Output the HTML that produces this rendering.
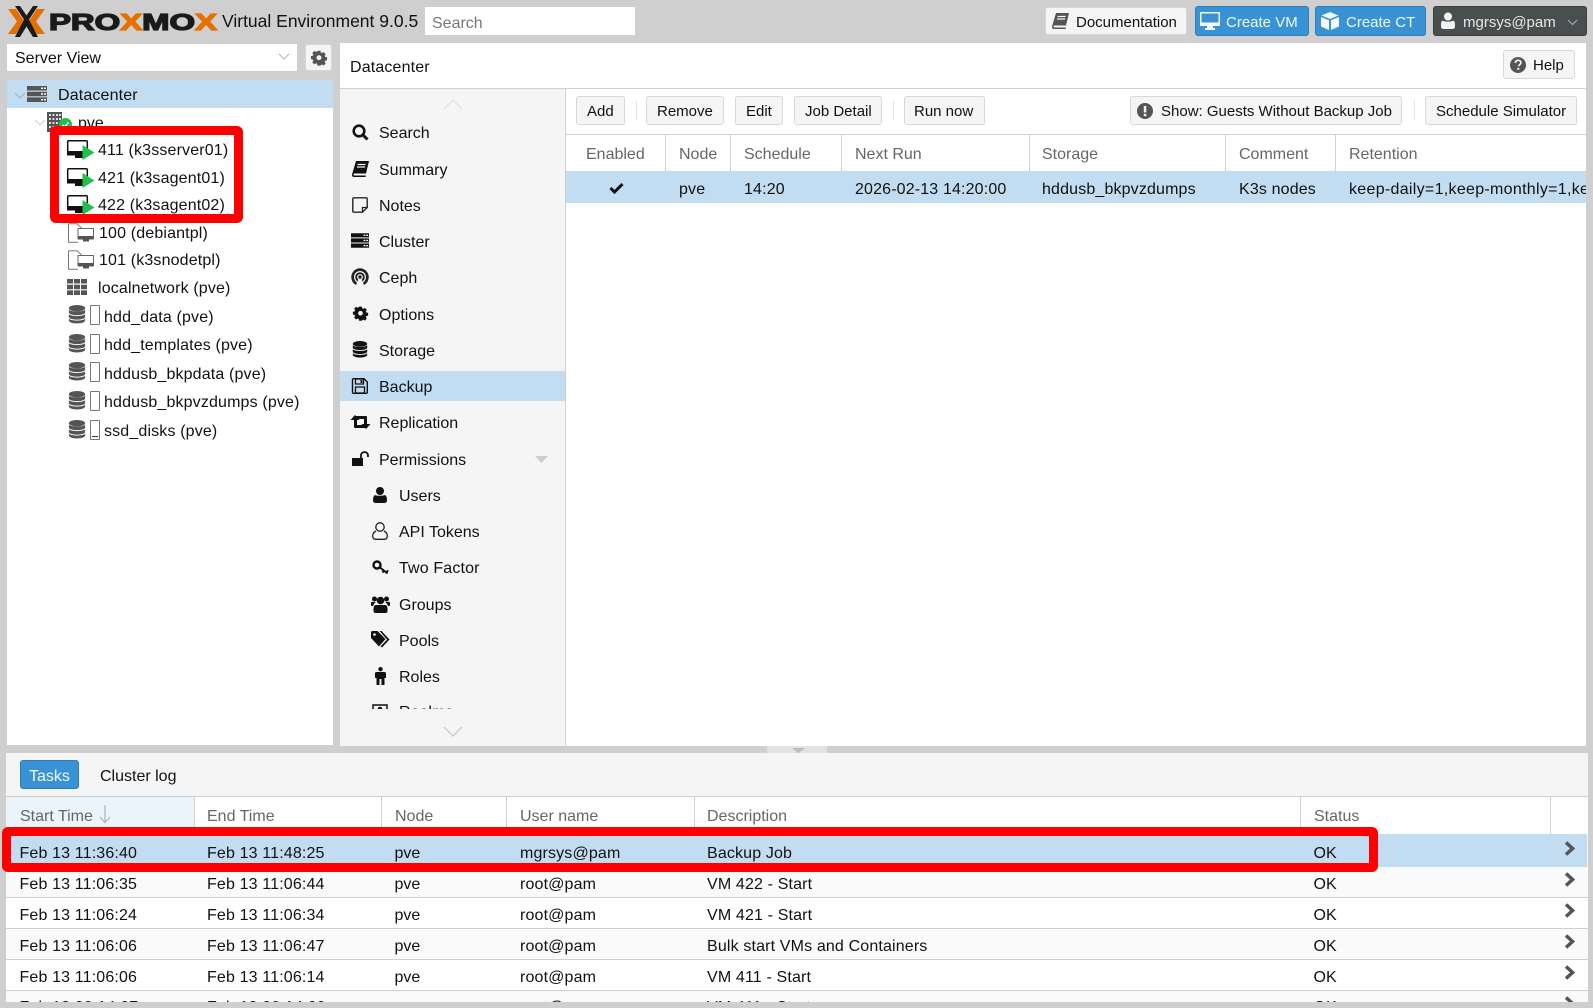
<!DOCTYPE html>
<html>
<head>
<meta charset="utf-8">
<title>Proxmox Virtual Environment</title>
<style>
html,body{margin:0;padding:0;width:1593px;height:1008px;overflow:hidden;background:#cfcfcf;}
body{position:relative;font-family:"Liberation Sans",sans-serif;font-size:16px;color:#111;}
div,span,svg{position:absolute;}
.t{white-space:nowrap;height:20px;line-height:20px;margin-top:2px;}
.d{letter-spacing:.15px;}
.s{font-size:15px;}
.h{color:#666;}
.b{box-sizing:border-box;background:#f5f5f5;border:1px solid #d8d8d8;border-radius:3px;}
.p{box-sizing:border-box;background:#3892d4;border:1px solid #2b7fbd;border-radius:3px;}
.w{color:#f4f9fd;}
.l{background:#d0d0d0;}
.i{overflow:visible;}
</style>
</head>
<body>
<svg width="0" height="0" style="left:0;top:0">
<defs>
<symbol id="vm" viewBox="0 0 28 21" overflow="visible">
<path d="M1.500.8h18a.8.8 0 0 1 .8.8V12H.7V1.600a.8.8 0 0 1 .8-.8z" fill="#fff" stroke="#111" stroke-width="1.500"/>
<path d="M0 11h21v4.500H0zM8 15h8v3H8z" fill="#111"/>
<path d="M15.500 5l12 7.500-12 7.500z" fill="#21bf4b"/>
</symbol>
<symbol id="tpl" viewBox="0 0 28 20">
<path d="M1.500.7H10L16 6.500M1.500.7V19.300H11" fill="none" stroke="#777" stroke-width="1"/>
<path d="M11 5.500h15.500v10H11z" fill="#fff" stroke="#666" stroke-width="1"/>
<path d="M11 13h15.500v3.500H11zM16 16.500h6v2h-6z" fill="#555"/>
</symbol>
<symbol id="db" viewBox="0 0 20 22">
<ellipse cx="10" cy="4" rx="9" ry="3.600" fill="currentColor"/>
<path d="M1 5.500c1 3 17 3 18 0v3.500c-1 3.500-17 3.500-18 0z" fill="currentColor"/>
<path d="M1 10.500c1 3 17 3 18 0v3.500c-1 3.500-17 3.500-18 0z" fill="currentColor"/>
<path d="M1 15.500c1 3 17 3 18 0v2.500c-1 4-17 4-18 0z" fill="currentColor"/>
</symbol>
<symbol id="srv" viewBox="0 0 20 16">
<path d="M0 0h20v4.500H0zM0 5.700h20v4.500H0zM0 11.400h20v4.600H0z" fill="#555"/>
<path d="M14 1.500h2v1.500h-2zM17 1.500h2v1.500h-2zM14 7.200h2v1.500h-2zM17 7.200h2v1.500h-2zM14 13h2v1.500h-2zM17 13h2v1.500h-2z" fill="#fff"/>
</symbol>
<symbol id="gear" viewBox="0 0 20 20">
<path fill-rule="evenodd" d="M8 1h4l.5 2.500 1.500.7 2.200-1.400 2.800 2.800-1.400 2.200.7 1.500 2.500.5v4l-2.500.5-.7 1.500 1.400 2.200-2.800 2.800-2.200-1.400-1.500.7L12 21H8l-.5-2.500-1.500-.7-2.200 1.400L1 16.400l1.400-2.200-.7-1.500L-.8 12.200v-4l2.500-.5.700-1.500L1 4 3.800 1.200 6 2.600l1.500-.7zM10 7a3.300 3.300 0 1 0 0 6.600A3.300 3.300 0 0 0 10 7z" transform="translate(1.700 1.100) scale(.83)"/>
</symbol>
<symbol id="chev" viewBox="0 0 11 15"><path d="M2 1.500L8.500 7.500 2 13.500" fill="none" stroke="#555" stroke-width="3.500"/></symbol>
</defs>
</svg>

<!-- logo -->
<svg class="i" style="left:0;top:0" width="225" height="42" viewBox="0 0 225 42">
<path d="M8 9h8l8.500 12.500L16 34H8l9-12.500z M45 9h-8l-8.500 12.500L37 34h8l-9-12.500z" fill="#e57000"/>
<path d="M15 6h5l6.500 9.500L33 6h5L29 19.500 38 37h-5l-6.500-10.500L20 37h-5L24 19.500z" fill="#1a1a1a"/>
<text x="49" y="29.800" font-family="Liberation Sans" font-weight="700" font-size="23" stroke-width="1.300" stroke="#1a1a1a" fill="#1a1a1a" textLength="168" lengthAdjust="spacingAndGlyphs">PRO<tspan fill="#e57000" stroke="#e57000">X</tspan>MO<tspan fill="#e57000" stroke="#e57000">X</tspan></text>
</svg>
<span class="t" style="left:222px;top:9px;font-size:17.500px;">Virtual Environment 9.0.5</span>
<div style="left:425px;top:7px;width:210px;height:28px;background:#fff;"></div>
<span class="t" style="left:432px;top:12px;color:#777;">Search</span>

<!-- top right -->
<div class="b" style="left:1045px;top:7px;width:142px;height:28px;"></div>
<svg class="i" style="left:1052px;top:13px" width="17" height="16" viewBox="0 0 17 16"><path d="M4 0h13l-3 12.500H2.500a1 1 0 0 0 0 2H14l-.5 1.500H2a2 2 0 0 1-2-2.500z" fill="#555"/><path d="M5.500 3.500h8M5 6h8" stroke="#f5f5f5" stroke-width="1.200"/></svg>
<span class="t s" style="left:1076px;top:11px;">Documentation</span>
<div class="p" style="left:1195px;top:6px;width:114px;height:30px;"></div>
<svg class="i" style="left:1200px;top:12px" width="20" height="18" viewBox="0 0 20 18"><path d="M1 0h18a1 1 0 0 1 1 1v12a1 1 0 0 1-1 1H1a1 1 0 0 1-1-1V1a1 1 0 0 1 1-1z" fill="#f4f9fd"/><path d="M1.500 1.500h17v9h-17z" fill="#3892d4"/><path d="M7 14h6v2h2v2H5v-2h2z" fill="#f4f9fd"/></svg>
<span class="t w s" style="left:1226px;top:11px;">Create VM</span>
<div class="p" style="left:1315px;top:6px;width:111px;height:30px;"></div>
<svg class="i" style="left:1321px;top:12px" width="18" height="18" viewBox="0 0 18 18"><path d="M9 0l8.500 3.500L9 7 .5 3.500z" fill="#f4f9fd"/><path d="M0 5l8 3.300V18l-8-3.500zM18 5l-8 3.300V18l8-3.500z" fill="#f4f9fd"/></svg>
<span class="t w s" style="left:1346px;top:11px;">Create CT</span>
<div style="box-sizing:border-box;left:1433px;top:6px;width:154px;height:30px;background:#494e4e;border:1px solid #3b3f3f;border-radius:3px;"></div>
<svg class="i" style="left:1441px;top:12px" width="14" height="17" viewBox="0 0 14 17"><circle cx="7" cy="4.500" r="4" fill="#f4f4f4"/><path d="M1.500 8.500C3 10 11 10 12.500 8.500 14 9.500 14 12 14 14c0 2-1 3-3 3H3c-2 0-3-1-3-3 0-2 0-4.500 1.500-5.500z" fill="#f4f4f4"/></svg>
<span class="t s" style="left:1463px;top:11px;color:#e8e8e8;">mgrsys@pam</span>
<svg class="i" style="left:1567px;top:19px" width="11" height="7" viewBox="0 0 11 7"><path d="M1 1l4.500 4.500L10 1" fill="none" stroke="#aaa" stroke-width="1.200"/></svg>

<!-- left selector -->
<div style="left:7px;top:44px;width:290px;height:27px;background:#fff;"></div>
<span class="t" style="left:15px;top:47px;">Server View</span>
<svg class="i" style="left:278px;top:53px" width="12" height="8" viewBox="0 0 12 8"><path d="M1 1l5 5 5-5" fill="none" stroke="#bbb" stroke-width="1.200"/></svg>
<div class="b" style="left:305px;top:44px;width:27px;height:27px;"></div>
<svg class="i" style="left:310px;top:49px;fill:#555" width="18" height="18"><use href="#gear"/></svg>

<!-- tree -->
<div style="left:7px;top:80px;width:326px;height:665px;background:#fff;overflow:hidden;"></div>
<div style="left:7px;top:80px;width:326px;height:28px;background:#c2ddf2;"></div>
<svg class="i" style="left:14px;top:92px" width="12" height="8" viewBox="0 0 12 8"><path d="M1 1l5 5 5-5" fill="none" stroke="#aab" stroke-width="1"/></svg>
<svg class="i" style="left:27px;top:86px" width="20" height="16"><use href="#srv"/></svg>
<span class="t d" style="left:58px;top:84px;">Datacenter</span>
<svg class="i" style="left:34px;top:119px" width="12" height="8" viewBox="0 0 12 8"><path d="M1 1l5 5 5-5" fill="none" stroke="#ccc" stroke-width="1"/></svg>
<svg class="i" style="left:47px;top:112px" width="26" height="22" viewBox="0 0 26 22"><path d="M0 0h15v20H0z" fill="#555"/><path d="M2 2h2v2H2zM5.500 2h2v2h-2zM9 2h2v2H9zM12 2h2v2h-2zM2 6h2v2H2zM5.500 6h2v2h-2zM9 6h2v2H9zM12 6h2v2h-2zM2 10h2v2H2zM5.500 10h2v2h-2zM9 10h2v2H9zM2 14h2v2H2zM5.500 14h2v2h-2z" fill="#ddd"/><circle cx="18.500" cy="12.500" r="6.500" fill="#21bf4b"/><path d="M15.500 13l2 2 4-4.500" fill="none" stroke="#fff" stroke-width="1.600"/></svg>
<span class="t" style="left:78px;top:112px;">pve</span>

<svg class="i" style="left:67px;top:140px" width="28" height="21"><use href="#vm"/></svg>
<span class="t d" style="left:98px;top:139px;">411 (k3sserver01)</span>
<svg class="i" style="left:67px;top:168px" width="28" height="21"><use href="#vm"/></svg>
<span class="t d" style="left:98px;top:167px;">421 (k3sagent01)</span>
<svg class="i" style="left:67px;top:195px" width="28" height="21"><use href="#vm"/></svg>
<span class="t d" style="left:98px;top:194px;">422 (k3sagent02)</span>
<svg class="i" style="left:67px;top:223px" width="28" height="20"><use href="#tpl"/></svg>
<span class="t d" style="left:99px;top:222px;">100 (debiantpl)</span>
<svg class="i" style="left:67px;top:250px" width="28" height="20"><use href="#tpl"/></svg>
<span class="t d" style="left:99px;top:249px;">101 (k3snodetpl)</span>
<svg class="i" style="left:67px;top:279px" width="20" height="16" viewBox="0 0 20 16"><path d="M0 0h6v4.500H0zM7 0h6v4.500H7zM14 0h6v4.500h-6zM0 5.700h6v4.500H0zM7 5.700h6v4.500H7zM14 5.700h6v4.500h-6zM0 11.400h6V16H0zM7 11.400h6V16H7zM14 11.400h6V16h-6z" fill="#555"/></svg>
<span class="t d" style="left:98px;top:277px;">localnetwork (pve)</span>

<svg class="i" style="left:68px;top:304px;color:#555" width="18" height="21"><use href="#db"/></svg>
<div style="box-sizing:border-box;left:90px;top:305px;width:10px;height:20px;border:1px solid #777;border-radius:1px;"></div>
<span class="t d" style="left:104px;top:306px;">hdd_data (pve)</span>
<svg class="i" style="left:68px;top:333px;color:#555" width="18" height="21"><use href="#db"/></svg>
<div style="box-sizing:border-box;left:90px;top:334px;width:10px;height:20px;border:1px solid #777;border-radius:1px;"></div>
<span class="t d" style="left:104px;top:334px;">hdd_templates (pve)</span>
<svg class="i" style="left:68px;top:361px;color:#555" width="18" height="21"><use href="#db"/></svg>
<div style="box-sizing:border-box;left:90px;top:362px;width:10px;height:20px;border:1px solid #777;border-radius:1px;"></div>
<span class="t d" style="left:104px;top:363px;">hddusb_bkpdata (pve)</span>
<svg class="i" style="left:68px;top:390px;color:#555" width="18" height="21"><use href="#db"/></svg>
<div style="box-sizing:border-box;left:90px;top:391px;width:10px;height:20px;border:1px solid #777;border-radius:1px;"></div>
<span class="t d" style="left:104px;top:391px;">hddusb_bkpvzdumps (pve)</span>
<svg class="i" style="left:68px;top:419px;color:#555" width="18" height="21"><use href="#db"/></svg>
<div style="box-sizing:border-box;left:90px;top:420px;width:10px;height:20px;border:1px solid #777;border-radius:1px;"></div>
<div style="left:92px;top:436px;width:6px;height:1px;background:#333;"></div>
<span class="t d" style="left:104px;top:420px;">ssd_disks (pve)</span>

<!-- content header -->
<div style="left:340px;top:43px;width:1246px;height:45px;background:#fff;"></div>
<span class="t d" style="left:350px;top:56px;">Datacenter</span>
<div class="b" style="left:1503px;top:50px;width:72px;height:29px;"></div>
<svg class="i" style="left:1510px;top:57px" width="16" height="16" viewBox="0 0 16 16"><circle cx="8" cy="8" r="8" fill="#555"/><path d="M5.300 6c.2-1.800 1.300-2.700 2.800-2.700S10.900 4.200 10.900 5.700c0 1.800-2.200 2-2.200 3.600" fill="none" stroke="#f5f5f5" stroke-width="1.700"/><rect x="7.300" y="10.800" width="2" height="2" fill="#f5f5f5"/></svg>
<span class="t s" style="left:1533px;top:54px;">Help</span>
<div class="l" style="left:340px;top:88px;width:1246px;height:1px;"></div>

<!-- nav -->
<div style="left:340px;top:89px;width:225px;height:657px;background:#f5f5f5;"></div>
<div class="l" style="left:565px;top:89px;width:1px;height:657px;"></div>
<svg class="i" style="left:443px;top:99px" width="20" height="11" viewBox="0 0 20 11"><path d="M1 10l9-9 9 9" fill="none" stroke="#e4e4e4" stroke-width="1.500"/></svg>
<svg class="i" style="left:352px;top:124px" width="17" height="17" viewBox="0 0 17 17"><circle cx="7" cy="7" r="5.300" fill="none" stroke="#111" stroke-width="2.600"/><path d="M10.500 10.500L15.500 15.500" stroke="#111" stroke-width="3"/></svg>
<span class="t" style="left:379px;top:122px;">Search</span>
<svg class="i" style="left:352px;top:161px" width="17" height="16" viewBox="0 0 17 16"><path d="M4 0h13l-3 12.500H2.500a1 1 0 0 0 0 2H14l-.5 1.500H2a2 2 0 0 1-2-2.500z" fill="#111"/><path d="M5.500 3.500h8M5 6h8" stroke="#f5f5f5" stroke-width="1.200"/></svg>
<span class="t" style="left:379px;top:159px;">Summary</span>
<svg class="i" style="left:352px;top:197px" width="16" height="16" viewBox="0 0 16 16"><path d="M2 .8h12a1.200 1.200 0 0 1 1.200 1.200v8.500L10.500 15.200H2A1.200 1.200 0 0 1 .8 14V2A1.200 1.200 0 0 1 2 .8z" fill="none" stroke="#222" stroke-width="1.400"/><path d="M15 10.500h-4.500v4.500" fill="none" stroke="#222" stroke-width="1.300"/></svg>
<span class="t" style="left:379px;top:195px;">Notes</span>
<svg class="i" style="left:351px;top:233px" width="18" height="15" viewBox="0 0 20 16"><path d="M0 0h20v4.500H0zM0 5.700h20v4.500H0zM0 11.400h20v4.600H0z" fill="#111"/><path d="M14 1.500h2v1.500h-2zM17 1.500h2v1.500h-2zM14 7.200h2v1.500h-2zM17 7.200h2v1.500h-2zM14 13h2v1.500h-2zM17 13h2v1.500h-2z" fill="#fff"/></svg>
<span class="t" style="left:379px;top:231px;">Cluster</span>
<svg class="i" style="left:351px;top:267px" width="18" height="19" viewBox="0 0 18 18"><path d="M5 17.500C2 16 .3 13 .3 9.500a8.700 8.700 0 0 1 17.400 0c0 3.500-1.700 6.500-4.700 8l-1-2.500c2-1.100 3-3.300 3-5.500a6 6 0 0 0-12 0c0 2.200 1 4.400 3 5.500z" fill="#222"/><path d="M6.500 14C5 13 4.200 11.300 4.200 9.500a4.800 4.800 0 0 1 9.600 0c0 1.800-.8 3.500-2.300 4.500l-.8-2c.8-.6 1.200-1.500 1.200-2.500a2.900 2.900 0 0 0-5.800 0c0 1 .4 1.900 1.200 2.500z" fill="#222"/><circle cx="9" cy="9.500" r="1.700" fill="#222"/></svg>
<span class="t" style="left:379px;top:267px;">Ceph</span>
<svg class="i" style="left:352px;top:305px;fill:#111" width="17" height="17"><use href="#gear"/></svg>
<span class="t" style="left:379px;top:304px;">Options</span>
<svg class="i" style="left:352px;top:340px;color:#111" width="16" height="19"><use href="#db"/></svg>
<span class="t" style="left:379px;top:340px;">Storage</span>
<div style="left:340px;top:371px;width:225px;height:30px;background:#c2ddf2;"></div>
<svg class="i" style="left:352px;top:378px" width="16" height="16" viewBox="0 0 16 16"><path d="M1.500.7h10.500l3.300 3.300V14.300a1 1 0 0 1-1 1H1.500a1 1 0 0 1-1-1V1.700a1 1 0 0 1 1-1z" fill="none" stroke="#111" stroke-width="1.400"/><path d="M3.500 1h8v5h-8zM3.500 9h9v6h-9z" fill="none" stroke="#111" stroke-width="1.300"/><path d="M8.500 2h1.800v3H8.500z" fill="#111"/></svg>
<span class="t" style="left:379px;top:376px;">Backup</span>
<svg class="i" style="left:351px;top:415px" width="19" height="14" viewBox="0 0 19 14"><path d="M4 0L8.500 5H6V10H12.500L15 13H4a1 1 0 0 1-1-1V5H-.5z" fill="#111"/><path d="M15 14L10.500 9H13V4H6.500L4 1H15a1 1 0 0 1 1 1V9H19.500z" fill="#111"/></svg>
<span class="t" style="left:379px;top:412px;">Replication</span>
<svg class="i" style="left:352px;top:451px" width="17" height="15" viewBox="0 0 17 15"><path d="M0 7h11v8H0z" fill="#111"/><path d="M9 7V4.500a3.500 3.500 0 0 1 7 0V6" fill="none" stroke="#111" stroke-width="1.800"/></svg>
<span class="t" style="left:379px;top:449px;">Permissions</span>
<svg class="i" style="left:535px;top:456px" width="13" height="7" viewBox="0 0 13 7"><path d="M0 0h13L6.500 7z" fill="#ccc"/></svg>
<svg class="i" style="left:373px;top:487px" width="14" height="16" viewBox="0 0 14 16"><circle cx="7" cy="4" r="4" fill="#111"/><path d="M2 8c1.500 1 8.500 1 10 0 1.500 1 2 3 2 5 0 2-1 3-3 3H3c-2 0-3-1-3-3 0-2 .5-4 2-5z" fill="#111"/></svg>
<span class="t" style="left:399px;top:485px;">Users</span>
<svg class="i" style="left:372px;top:522px" width="16" height="18" viewBox="0 0 16 18"><circle cx="8" cy="5" r="4.200" fill="none" stroke="#222" stroke-width="1.300"/><path d="M4 9c-2 1-3.300 3-3.300 5 0 2 1 3.300 3 3.300h8.600c2 0 3-1.300 3-3.300 0-2-1.300-4-3.300-5" fill="none" stroke="#222" stroke-width="1.300"/></svg>
<span class="t" style="left:399px;top:521px;">API Tokens</span>
<svg class="i" style="left:372px;top:560px" width="17" height="15" viewBox="0 0 17 15"><circle cx="5" cy="5" r="3.500" fill="none" stroke="#111" stroke-width="2.400"/><path d="M8 7.500l7.500 6M12 10.500l-1.500 2M14.500 12.300l1.500-2" stroke="#111" stroke-width="2"/></svg>
<span class="t d" style="left:399px;top:557px;">Two Factor</span>
<svg class="i" style="left:371px;top:595px" width="19" height="18" viewBox="0 0 19 18"><circle cx="9.500" cy="5.500" r="3.800" fill="#111"/><circle cx="3.500" cy="4" r="2.500" fill="#111"/><circle cx="15.500" cy="4" r="2.500" fill="#111"/><path d="M5 10h9c1.500 0 2.500 1.500 2.500 4v2c0 1-.5 2-2 2h-10c-1.500 0-2-1-2-2v-2c0-2.500 1-4 2.500-4z" fill="#111"/><path d="M0 8c0-1 1-1.500 2-1h3c-1.500 1-2.500 2-2.800 4H1c-1 0-1-1-1-3zM19 8c0-1-1-1.500-2-1h-3c1.500 1 2.500 2 2.800 4H18c1 0 1-1 1-3z" fill="#111"/></svg>
<span class="t" style="left:399px;top:594px;">Groups</span>
<svg class="i" style="left:371px;top:631px" width="19" height="17" viewBox="0 0 19 17"><path d="M0 1.500A1.500 1.500 0 0 1 1.500 0h5l8 8L8 15.500 0 7z" fill="#111"/><path d="M8.500 0h2l8 8.500L11 16.500l-1.500-1L16 8.500z" fill="#111"/><circle cx="3.500" cy="3.500" r="1.300" fill="#f5f5f5"/></svg>
<span class="t" style="left:399px;top:630px;">Pools</span>
<svg class="i" style="left:375px;top:667px" width="11" height="18" viewBox="0 0 11 18"><circle cx="5.500" cy="2.200" r="2.200" fill="#111"/><path d="M1.500 5h8A1.500 1.500 0 0 1 11 6.500V11H9.500v7h-3v-6h-2v6h-3v-7H0V6.500A1.500 1.500 0 0 1 1.500 5z" fill="#111"/></svg>
<span class="t" style="left:399px;top:666px;">Roles</span>
<div style="left:340px;top:695px;width:225px;height:14px;overflow:hidden;">
<svg class="i" style="left:32px;top:9px" width="16" height="14" viewBox="0 0 16 14"><path d="M1 1h14v12H1z" fill="none" stroke="#111" stroke-width="1.500"/><circle cx="8" cy="5" r="2.300" fill="#111"/></svg>
<span class="t" style="left:59px;top:6px;">Realms</span>
</div>
<svg class="i" style="left:443px;top:726px" width="20" height="11" viewBox="0 0 20 11"><path d="M1 1l9 9 9-9" fill="none" stroke="#ccc" stroke-width="1.500"/></svg>

<!-- content area -->
<div style="left:566px;top:89px;width:1020px;height:657px;background:#fff;"></div>
<div class="b" style="left:576px;top:96px;width:49px;height:29px;"></div><span class="t s" style="left:587px;top:100px;">Add</span>
<div style="left:636px;top:100px;width:1px;height:20px;background:#e4e4e4;"></div>
<div class="b" style="left:646px;top:96px;width:78px;height:29px;"></div><span class="t s" style="left:657px;top:100px;">Remove</span>
<div class="b" style="left:735px;top:96px;width:48px;height:29px;"></div><span class="t s" style="left:746px;top:100px;">Edit</span>
<div class="b" style="left:794px;top:96px;width:88px;height:29px;"></div><span class="t s" style="left:805px;top:100px;">Job Detail</span>
<div style="left:893px;top:100px;width:1px;height:20px;background:#e4e4e4;"></div>
<div class="b" style="left:904px;top:96px;width:81px;height:29px;"></div><span class="t s" style="left:914px;top:100px;">Run now</span>
<div class="b" style="left:1130px;top:96px;width:272px;height:29px;"></div>
<svg class="i" style="left:1137px;top:103px" width="16" height="16" viewBox="0 0 16 16"><circle cx="8" cy="8" r="8" fill="#555"/><rect x="6.800" y="3" width="2.500" height="6.500" fill="#f5f5f5"/><rect x="6.800" y="10.800" width="2.500" height="2.400" fill="#f5f5f5"/></svg>
<span class="t s" style="left:1161px;top:100px;">Show: Guests Without Backup Job</span>
<div style="left:1414px;top:100px;width:1px;height:20px;background:#e4e4e4;"></div>
<div class="b" style="left:1425px;top:96px;width:152px;height:29px;"></div><span class="t s" style="left:1436px;top:100px;">Schedule Simulator</span>
<div class="l" style="left:566px;top:134px;width:1020px;height:1px;"></div>

<div class="l" style="left:665px;top:135px;width:1px;height:36px;"></div>
<div class="l" style="left:730px;top:135px;width:1px;height:36px;"></div>
<div class="l" style="left:841px;top:135px;width:1px;height:36px;"></div>
<div class="l" style="left:1029px;top:135px;width:1px;height:36px;"></div>
<div class="l" style="left:1225px;top:135px;width:1px;height:36px;"></div>
<div class="l" style="left:1335px;top:135px;width:1px;height:36px;"></div>
<span class="t h" style="left:586px;top:143px;">Enabled</span>
<span class="t h" style="left:679px;top:143px;">Node</span>
<span class="t h" style="left:744px;top:143px;">Schedule</span>
<span class="t h" style="left:855px;top:143px;">Next Run</span>
<span class="t h" style="left:1042px;top:143px;">Storage</span>
<span class="t h" style="left:1239px;top:143px;">Comment</span>
<span class="t h" style="left:1349px;top:143px;">Retention</span>
<div style="left:566px;top:171px;width:1020px;height:32px;background:#c2ddf2;"></div>
<svg class="i" style="left:609px;top:182px" width="15" height="12" viewBox="0 0 15 12"><path d="M1.500 6l4 4 8-8" fill="none" stroke="#111" stroke-width="3"/></svg>
<span class="t d" style="left:679px;top:178px;">pve</span>
<span class="t d" style="left:744px;top:178px;">14:20</span>
<span class="t d" style="left:855px;top:178px;">2026-02-13 14:20:00</span>
<span class="t d" style="left:1042px;top:178px;">hddusb_bkpvzdumps</span>
<span class="t d" style="left:1239px;top:178px;">K3s nodes</span>
<div style="left:1349px;top:171px;width:237px;height:32px;overflow:hidden;"><span class="t" style="left:0;top:7px;letter-spacing:.3px;">keep-daily=1,keep-monthly=1,keep-weekly=1</span></div>

<!-- splitter -->
<div style="left:767px;top:746px;width:60px;height:7px;background:#e2e2e2;"></div>
<svg class="i" style="left:792px;top:748px" width="13" height="5" viewBox="0 0 13 5"><path d="M0 0h13L6.500 5z" fill="#bbb"/></svg>

<!-- bottom panel -->
<div style="left:6px;top:753px;width:1582px;height:249px;background:#f5f5f5;overflow:hidden;">
<div class="p" style="left:14px;top:7px;width:59px;height:29px;"></div>
<span class="t w" style="left:23px;top:12px;">Tasks</span>
<span class="t" style="left:94px;top:12px;">Cluster log</span>
<div class="l" style="left:0;top:43px;width:1582px;height:1px;"></div>
<div style="left:0;top:44px;width:1582px;height:37px;background:#fff;"></div>
<div style="left:0;top:44px;width:188px;height:37px;background:#ebf3fb;"></div>
<div class="l" style="left:188px;top:44px;width:1px;height:37px;"></div>
<div class="l" style="left:375px;top:44px;width:1px;height:37px;"></div>
<div class="l" style="left:500px;top:44px;width:1px;height:37px;"></div>
<div class="l" style="left:688px;top:44px;width:1px;height:37px;"></div>
<div class="l" style="left:1294px;top:44px;width:1px;height:37px;"></div>
<div class="l" style="left:1544px;top:44px;width:1px;height:37px;"></div>
<span class="t h" style="left:14px;top:52px;">Start Time</span>
<svg class="i" style="left:93px;top:52px" width="12" height="19" viewBox="0 0 12 19"><path d="M6 0v17M1 12l5 5.500 5-5.500" fill="none" stroke="#b5b5b5" stroke-width="1.300"/></svg>
<span class="t h" style="left:201px;top:52px;">End Time</span>
<span class="t h" style="left:389px;top:52px;">Node</span>
<span class="t h" style="left:514px;top:52px;">User name</span>
<span class="t h" style="left:701px;top:52px;">Description</span>
<span class="t h" style="left:1308px;top:52px;">Status</span>

<div style="left:0;top:81px;width:1581px;height:33px;background:#c2ddf2;"></div>
<div style="left:0;top:114px;width:1582px;height:30px;background:#fafafa;"></div>
<div class="l" style="left:0;top:144px;width:1582px;height:1px;"></div>
<div style="left:0;top:145px;width:1582px;height:30px;background:#fff;"></div>
<div class="l" style="left:0;top:175px;width:1582px;height:1px;"></div>
<div style="left:0;top:176px;width:1582px;height:30px;background:#fafafa;"></div>
<div class="l" style="left:0;top:206px;width:1582px;height:1px;"></div>
<div style="left:0;top:207px;width:1582px;height:30px;background:#fff;"></div>
<div class="l" style="left:0;top:237px;width:1582px;height:1px;"></div>
<div style="left:0;top:238px;width:1582px;height:12px;background:#fafafa;"></div>

<span class="t d" style="left:13.500px;top:89px;">Feb 13 11:36:40</span><span class="t d" style="left:201px;top:89px;">Feb 13 11:48:25</span><span class="t" style="left:388.500px;top:89px;">pve</span><span class="t d" style="left:514px;top:89px;">mgrsys@pam</span><span class="t d" style="left:701px;top:89px;">Backup Job</span><span class="t" style="left:1307.500px;top:89px;">OK</span>
<span class="t d" style="left:13.500px;top:120px;">Feb 13 11:06:35</span><span class="t d" style="left:201px;top:120px;">Feb 13 11:06:44</span><span class="t" style="left:388.500px;top:120px;">pve</span><span class="t d" style="left:514px;top:120px;">root@pam</span><span class="t d" style="left:701px;top:120px;">VM 422 - Start</span><span class="t" style="left:1307.500px;top:120px;">OK</span>
<span class="t d" style="left:13.500px;top:151px;">Feb 13 11:06:24</span><span class="t d" style="left:201px;top:151px;">Feb 13 11:06:34</span><span class="t" style="left:388.500px;top:151px;">pve</span><span class="t d" style="left:514px;top:151px;">root@pam</span><span class="t d" style="left:701px;top:151px;">VM 421 - Start</span><span class="t" style="left:1307.500px;top:151px;">OK</span>
<span class="t d" style="left:13.500px;top:182px;">Feb 13 11:06:06</span><span class="t d" style="left:201px;top:182px;">Feb 13 11:06:47</span><span class="t" style="left:388.500px;top:182px;">pve</span><span class="t d" style="left:514px;top:182px;">root@pam</span><span class="t d" style="left:701px;top:182px;">Bulk start VMs and Containers</span><span class="t" style="left:1307.500px;top:182px;">OK</span>
<span class="t d" style="left:13.500px;top:213px;">Feb 13 11:06:06</span><span class="t d" style="left:201px;top:213px;">Feb 13 11:06:14</span><span class="t" style="left:388.500px;top:213px;">pve</span><span class="t d" style="left:514px;top:213px;">root@pam</span><span class="t d" style="left:701px;top:213px;">VM 411 - Start</span><span class="t" style="left:1307.500px;top:213px;">OK</span>
<span class="t d" style="left:13.500px;top:243px;">Feb 13 09:14:07</span><span class="t d" style="left:201px;top:243px;">Feb 13 09:14:09</span><span class="t" style="left:388.500px;top:243px;">pve</span><span class="t d" style="left:514px;top:243px;">root@pam</span><span class="t d" style="left:701px;top:243px;">VM 411 - Start</span><span class="t" style="left:1307.500px;top:243px;">OK</span>
<svg class="i" style="left:1558px;top:88px" width="11" height="15"><use href="#chev"/></svg>
<svg class="i" style="left:1558px;top:119px" width="11" height="15"><use href="#chev"/></svg>
<svg class="i" style="left:1558px;top:150px" width="11" height="15"><use href="#chev"/></svg>
<svg class="i" style="left:1558px;top:181px" width="11" height="15"><use href="#chev"/></svg>
<svg class="i" style="left:1558px;top:212px" width="11" height="15"><use href="#chev"/></svg>
<svg class="i" style="left:1558px;top:243px" width="11" height="15"><use href="#chev"/></svg>
</div>

<!-- red annotations -->
<div style="box-sizing:border-box;left:50px;top:126px;width:193px;height:97px;border:9px solid #fe0000;border-radius:6px;"></div>
<div style="box-sizing:border-box;left:2px;top:827px;width:1376px;height:45px;border:9px solid #fe0000;border-radius:6px;"></div>
</body>
</html>
